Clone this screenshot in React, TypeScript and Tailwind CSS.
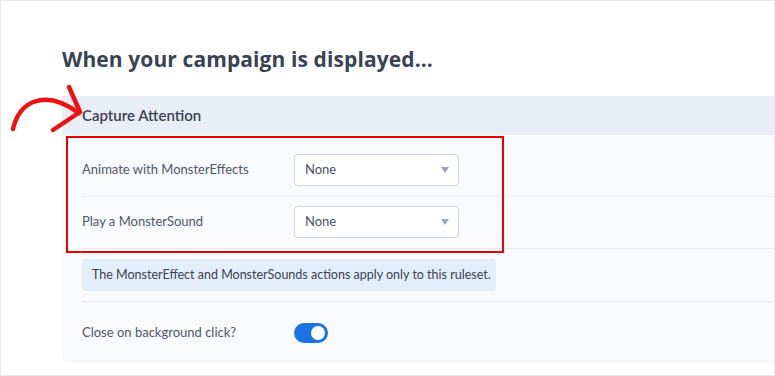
import React from 'react';

const font = { fontFamily: 'Lato, "Open Sans", sans-serif' };

function Select() {
  return (
    <div className="flex h-[32px] w-[165px] items-center justify-between rounded-[4px] border border-[#cdd4e0] bg-white pl-[10px] pr-[9px]">
      <span className="text-[13px] text-[#4a5262]">None</span>
      <span className="h-0 w-0 border-x-[4px] border-t-[6px] border-x-transparent border-t-[#9aa5bb]" />
    </div>
  );
}

export default function App() {
  return (
    <div
      className="relative h-[376px] w-[775px] overflow-hidden border border-[#e6e8eb] bg-white"
      style={font}
    >
      <h1 className="ml-[61px] mt-[44px] font-['Open_Sans',sans-serif] text-[21px] font-bold leading-[28px] tracking-[0.1px] text-[#3b4252]">
        When your campaign is displayed...
      </h1>

      <div className="ml-[61px] mt-[23px] w-[740px] overflow-hidden rounded-bl-[6px]">
        <div className="flex h-[39px] items-center bg-[#e9edf5] pl-[20px] text-[15px] font-semibold text-[#3b4252]">
          Capture Attention
        </div>

        <div className="bg-[#f9fafc] pl-[20px]">
          <div className="flex items-center border-b border-[#eceef3] pb-[10px] pt-[19px]">
            <span className="w-[212px] text-[13px] text-[#4f5868]">Animate with MonsterEffects</span>
            <Select />
          </div>
          <div className="flex items-center border-b border-[#e6e9ef] py-[9px] pb-[10px]">
            <span className="w-[212px] text-[13px] text-[#4f5868]">Play a MonsterSound</span>
            <Select />
          </div>
          <div className="border-b border-[#e6e9ef] py-[10px]">
            <div className="flex h-[32px] w-[414px] items-center rounded-[4px] bg-[#e2eef9] pl-[10px] text-[12.5px] text-[#3b4252]">
              The MonsterEffect and MonsterSounds actions apply only to this ruleset.
            </div>
          </div>
          <div className="flex h-[61px] items-center">
            <span className="w-[212px] text-[13px] text-[#4f5868]">Close on background click?</span>
            <div className="flex h-[20px] w-[34px] items-center justify-end rounded-full bg-[#1a73e2] pr-[3px]">
              <span className="h-[14px] w-[14px] rounded-full bg-white" />
            </div>
          </div>
        </div>
      </div>

      {/* highlight box */}
      <div className="absolute left-[65px] top-[135px] h-[117px] w-[438px] border-2 border-[#ee0000]" />

      {/* hand drawn arrow */}
      <svg className="absolute left-0 top-[80px]" width="100" height="60" viewBox="0 0 100 60">
        <path
          d="M12 48 C 18 22, 42 6, 78 32"
          fill="none"
          stroke="#ee1111"
          strokeWidth="4.5"
          strokeLinecap="round"
        />
        <path
          d="M68 6 L 79 31 L 52 49"
          fill="none"
          stroke="#ee1111"
          strokeWidth="4.5"
          strokeLinecap="round"
          strokeLinejoin="round"
        />
      </svg>
    </div>
  );
}
